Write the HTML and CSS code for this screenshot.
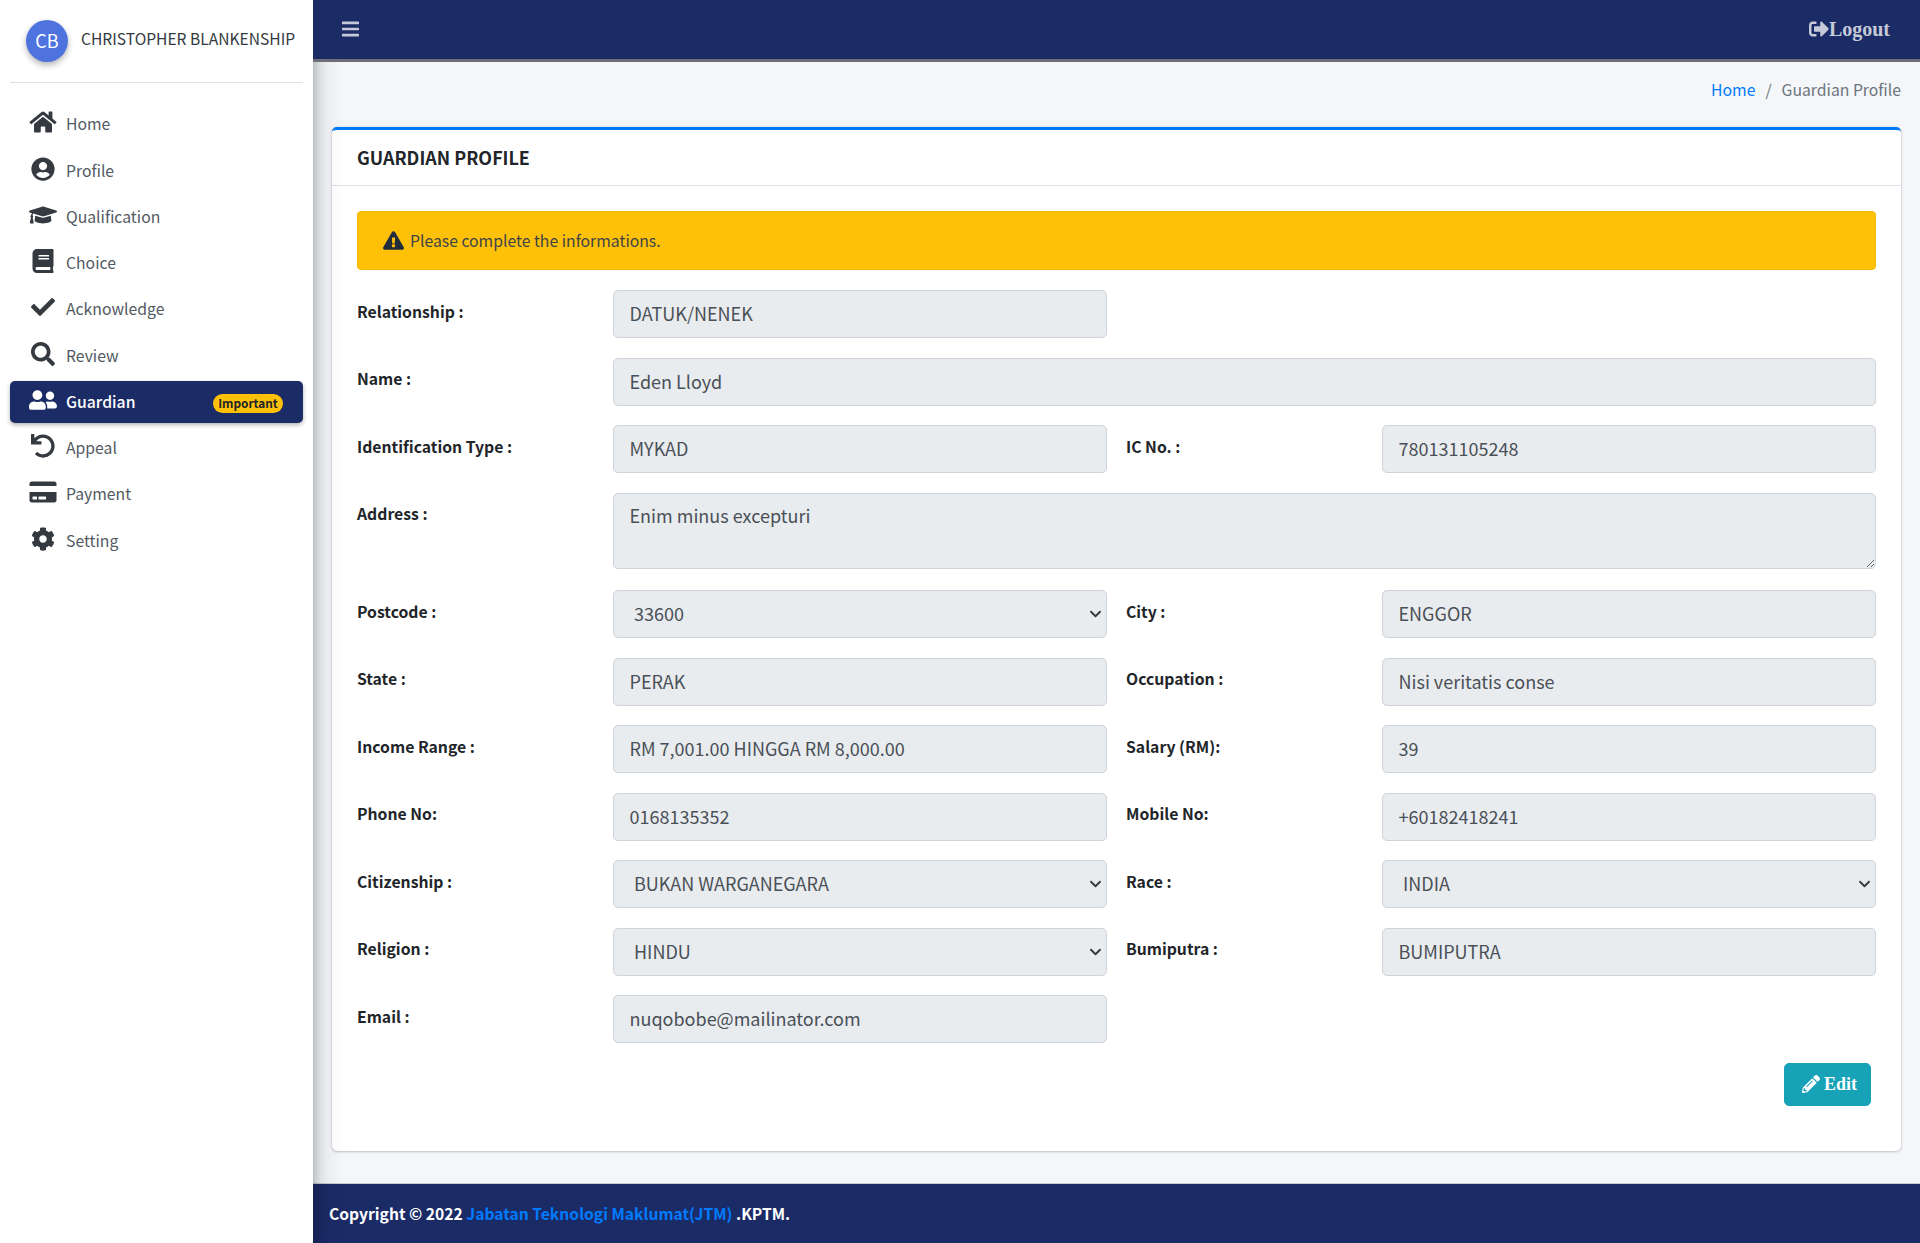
FILE: index.html
```html
<!DOCTYPE html>
<html lang="en">

<head>
    <title>Guardian Profile</title>
    <link rel="stylesheet" href="styles.css">
</head>

<body>
    <svg class="defs" xmlns="http://www.w3.org/2000/svg">
        <symbol id="i-home" viewBox="0 0 576 512"><path d="M280.37 148.26L96 300.11V464a16 16 0 0 0 16 16l112.06-.29a16 16 0 0 0 15.92-16V368a16 16 0 0 1 16-16h64a16 16 0 0 1 16 16v95.64a16 16 0 0 0 16 16.05L464 480a16 16 0 0 0 16-16V300L295.67 148.26a12.19 12.19 0 0 0-15.3 0zM571.6 251.47L488 182.56V44.05a12 12 0 0 0-12-12h-56a12 12 0 0 0-12 12v72.61L318.47 43a48 48 0 0 0-61 0L4.34 251.47a12 12 0 0 0-1.6 16.9l25.5 31A12 12 0 0 0 45.15 301l235.22-193.74a12.19 12.19 0 0 1 15.3 0L530.9 301a12 12 0 0 0 16.9-1.6l25.5-31a12 12 0 0 0-1.7-16.93z"/></symbol>
        <symbol id="i-user" viewBox="0 0 496 512"><path d="M248 8C111 8 0 119 0 256s111 248 248 248 248-111 248-248S385 8 248 8zm0 96c48.6 0 88 39.4 88 88s-39.4 88-88 88-88-39.4-88-88 39.4-88 88-88zm0 344c-58.7 0-111.3-26.6-146.5-68.2 18.8-35.4 55.6-59.8 98.5-59.8 2.4 0 4.8.4 7.1 1.1 13 4.2 26.6 6.9 40.9 6.9 14.3 0 28-2.7 40.9-6.9 2.3-.7 4.7-1.1 7.1-1.1 42.9 0 79.7 24.4 98.5 59.8C359.3 421.4 306.7 448 248 448z"/></symbol>
        <symbol id="i-cap" viewBox="0 0 640 512"><path d="M622.34 153.2L343.4 67.5c-15.2-4.67-31.6-4.67-46.79 0L17.66 153.2c-23.54 7.23-23.54 38.36 0 45.59l48.63 14.94c-10.67 13.19-17.23 29.28-17.88 46.9C38.78 266.15 32 276.11 32 288c0 10.78 5.68 19.85 13.86 25.65L20.33 428.53C18.11 438.52 25.71 448 35.94 448h56.11c10.24 0 17.84-9.48 15.62-19.47L82.14 313.65C90.32 307.85 96 298.78 96 288c0-11.57-6.47-21.25-15.66-26.87.76-15.02 8.44-28.3 20.69-36.72L296.6 284.5c9.06 2.78 26.44 6.25 46.79 0l278.95-85.7c23.55-7.24 23.55-38.36 0-45.6zM352.79 315.09c-28.53 8.76-52.84 3.92-65.59 0l-145.02-44.55L128 384c0 35.35 85.96 64 192 64s192-28.65 192-64l-14.18-113.47-145.03 44.56z"/></symbol>
        <symbol id="i-book" viewBox="0 0 448 512"><path d="M448 360V24c0-13.3-10.7-24-24-24H96C43 0 0 43 0 96v320c0 53 43 96 96 96h328c13.3 0 24-10.7 24-24v-16c0-7.5-3.5-14.3-8.9-18.7-4.2-15.4-4.2-59.3 0-74.7 5.4-4.3 8.9-11.1 8.9-18.6zM128 134c0-3.3 2.7-6 6-6h212c3.3 0 6 2.7 6 6v20c0 3.3-2.7 6-6 6H134c-3.3 0-6-2.7-6-6v-20zm0 64c0-3.3 2.7-6 6-6h212c3.3 0 6 2.7 6 6v20c0 3.3-2.7 6-6 6H134c-3.3 0-6-2.7-6-6v-20zm253.4 250H96c-17.7 0-32-14.3-32-32 0-17.6 14.4-32 32-32h285.4c-1.9 17.1-1.9 46.9 0 64z"/></symbol>
        <symbol id="i-check" viewBox="0 0 512 512"><path d="M173.898 439.404l-166.4-166.4c-9.997-9.997-9.997-26.206 0-36.204l36.203-36.204c9.997-9.998 26.207-9.998 36.204 0L192 312.69 432.095 72.596c9.997-9.997 26.207-9.997 36.204 0l36.203 36.204c9.997 9.997 9.997 26.206 0 36.204l-294.4 294.401c-9.998 9.997-26.207 9.997-36.204-.001z"/></symbol>
        <symbol id="i-search" viewBox="0 0 512 512"><path d="M505 442.7L405.3 343c-4.5-4.5-10.6-7-17-7H372c27.6-35.3 44-79.7 44-128C416 93.1 322.9 0 208 0S0 93.1 0 208s93.1 208 208 208c48.3 0 92.7-16.4 128-44v16.3c0 6.4 2.5 12.5 7 17l99.7 99.7c9.4 9.4 24.6 9.4 33.9 0l28.3-28.3c9.4-9.4 9.4-24.6.1-34zM208 336c-70.7 0-128-57.2-128-128 0-70.7 57.2-128 128-128 70.7 0 128 57.2 128 128 0 70.7-57.2 128-128 128z"/></symbol>
        <symbol id="i-friends" viewBox="0 0 640 512"><path d="M192 256c61.9 0 112-50.1 112-112S253.9 32 192 32 80 82.1 80 144s50.1 112 112 112zm76.8 32h-8.3c-20.8 10-43.9 16-68.5 16s-47.6-6-68.5-16h-8.3C51.6 288 0 339.6 0 403.2V432c0 26.5 21.5 48 48 48h288c26.5 0 48-21.5 48-48v-28.8c0-63.6-51.6-115.2-115.2-115.2zM480 256c53 0 96-43 96-96s-43-96-96-96-96 43-96 96 43 96 96 96zm48 32h-3.8c-13.9 4.8-28.6 8-44.2 8s-30.3-3.2-44.2-8H432c-20.4 0-39.2 5.9-55.7 15.4 24.4 26.3 39.7 61.2 39.7 99.8v38.4c0 2.2-.5 4.3-.6 6.4H592c26.5 0 48-21.5 48-48 0-61.9-50.1-112-112-112z"/></symbol>
        <symbol id="i-undo" viewBox="0 0 512 512"><path d="M212.333 224.333H12c-6.627 0-12-5.373-12-12V12C0 5.373 5.373 0 12 0h48c6.627 0 12 5.373 12 12v78.112C117.773 39.279 184.26 7.47 258.175 8.007c136.906.994 246.448 111.623 246.157 248.532C504.041 393.258 393.12 504 256.333 504c-64.089 0-122.496-24.313-166.51-64.215-5.099-4.622-5.334-12.554-.467-17.42l33.967-33.967c4.474-4.474 11.662-4.717 16.401-.525C170.76 415.336 211.58 432 256.333 432c97.268 0 176-78.716 176-176 0-97.267-78.716-176-176-176-58.496 0-110.28 28.476-142.274 72.333h98.274c6.627 0 12 5.373 12 12v48c0 6.627-5.373 12-12 12z"/></symbol>
        <symbol id="i-card" viewBox="0 0 576 512"><path d="M0 432c0 26.5 21.5 48 48 48h480c26.5 0 48-21.5 48-48V256H0v176zm192-68c0-6.6 5.4-12 12-12h136c6.6 0 12 5.4 12 12v40c0 6.6-5.4 12-12 12H204c-6.6 0-12-5.4-12-12v-40zm-128 0c0-6.6 5.4-12 12-12h72c6.6 0 12 5.4 12 12v40c0 6.6-5.4 12-12 12H76c-6.6 0-12-5.4-12-12v-40zM576 80v48H0V80c0-26.5 21.5-48 48-48h480c26.5 0 48 21.5 48 48z"/></symbol>
        <symbol id="i-cog" viewBox="0 0 512 512"><path d="M487.4 315.7l-42.6-24.6c4.3-23.2 4.3-47 0-70.2l42.6-24.6c4.9-2.8 7.1-8.6 5.5-14-11.1-35.6-30-67.8-54.7-94.6-3.8-4.1-10-5.1-14.8-2.3L380.8 110c-17.9-15.4-38.5-27.3-60.8-35.1V25.8c0-5.6-3.9-10.5-9.4-11.7-36.7-8.2-74.3-7.8-109.2 0-5.5 1.2-9.4 6.1-9.4 11.7V75c-22.2 7.9-42.8 19.8-60.8 35.1L88.7 85.5c-4.9-2.8-11-1.9-14.8 2.3-24.7 26.7-43.6 58.9-54.7 94.6-1.7 5.4.6 11.2 5.5 14L67.3 221c-4.3 23.2-4.3 47 0 70.2l-42.6 24.6c-4.9 2.8-7.1 8.6-5.5 14 11.1 35.6 30 67.8 54.7 94.6 3.8 4.1 10 5.1 14.8 2.3l42.6-24.6c17.9 15.4 38.5 27.3 60.8 35.1v49.2c0 5.6 3.9 10.5 9.4 11.7 36.7 8.2 74.3 7.8 109.2 0 5.5-1.2 9.4-6.1 9.4-11.7v-49.2c22.2-7.9 42.8-19.8 60.8-35.1l42.6 24.6c4.9 2.8 11 1.9 14.8-2.3 24.7-26.7 43.6-58.9 54.7-94.6 1.5-5.5-.7-11.3-5.6-14.1zM256 336c-44.1 0-80-35.9-80-80s35.9-80 80-80 80 35.9 80 80-35.9 80-80 80z"/></symbol>
        <symbol id="i-bars" viewBox="0 0 448 512"><path d="M16 132h416c8.837 0 16-7.163 16-16V76c0-8.837-7.163-16-16-16H16C7.163 60 0 67.163 0 76v40c0 8.837 7.163 16 16 16zm0 160h416c8.837 0 16-7.163 16-16v-40c0-8.837-7.163-16-16-16H16c-8.837 0-16 7.163-16 16v40c0 8.837 7.163 16 16 16zm0 160h416c8.837 0 16-7.163 16-16v-40c0-8.837-7.163-16-16-16H16c-8.837 0-16 7.163-16 16v40c0 8.837 7.163 16 16 16z"/></symbol>
        <symbol id="i-signout" viewBox="0 0 512 512"><path d="M497 273L329 441c-15 15-41 4.5-41-17v-96H152c-13.3 0-24-10.7-24-24v-96c0-13.3 10.7-24 24-24h136V88c0-21.4 25.9-32 41-17l168 168c9.3 9.4 9.3 24.6 0 34zM192 436v-40c0-6.6-5.4-12-12-12H96c-17.7 0-32-14.3-32-32V160c0-17.7 14.3-32 32-32h84c6.6 0 12-5.4 12-12V76c0-6.6-5.4-12-12-12H96c-53 0-96 43-96 96v192c0 53 43 96 96 96h84c6.6 0 12-5.4 12-12z"/></symbol>
        <symbol id="i-warn" viewBox="0 0 576 512"><path d="M569.517 440.013C587.975 472.007 564.806 512 527.94 512H48.054c-36.937 0-59.999-40.055-41.577-71.987L246.423 23.985c18.467-32.009 64.72-31.951 83.154 0l239.94 416.028zM288 354c-25.405 0-46 20.595-46 46s20.595 46 46 46 46-20.595 46-46-20.595-46-46-46zm-43.673-165.346l7.418 136c.347 6.364 5.609 11.346 11.982 11.346h48.546c6.373 0 11.635-4.982 11.982-11.346l7.418-136c.375-6.874-5.098-12.654-11.982-12.654h-63.383c-6.884 0-12.356 5.78-11.981 12.654z"/></symbol>
        <symbol id="i-pencil" viewBox="0 0 512 512"><path d="M497.9 142.1l-46.1 46.1c-4.7 4.7-12.3 4.7-17 0l-111-111c-4.7-4.7-4.7-12.3 0-17l46.1-46.1c18.7-18.7 49.1-18.7 67.9 0l60.1 60.1c18.8 18.7 18.8 49.1 0 67.9zM284.2 99.8L21.6 362.4.4 483.9c-2.9 16.4 11.4 30.6 27.8 27.8l121.5-21.3 262.6-262.6c4.7-4.7 4.7-12.3 0-17l-111-111c-4.8-4.7-12.4-4.7-17.1 0zM124.1 339.9c-5.5-5.5-5.5-14.3 0-19.8l154-154c5.5-5.5 14.3-5.5 19.8 0s5.5 14.3 0 19.8l-154 154c-5.5 5.5-14.3 5.5-19.8 0zM88 424h48v36.3l-64.5 11.3-31.1-31.1L51.7 376H88v48z"/></symbol>
    </svg>

    <aside class="sidebar">
        <div class="user">
            <div class="avatar">CB</div>
            <div class="username">CHRISTOPHER BLANKENSHIP</div>
        </div>
        <nav class="menu">
            <a class="menu-item"><svg class="menu-icon"><use href="#i-home"/></svg><span>Home</span></a>
            <a class="menu-item"><svg class="menu-icon"><use href="#i-user"/></svg><span>Profile</span></a>
            <a class="menu-item"><svg class="menu-icon"><use href="#i-cap"/></svg><span>Qualification</span></a>
            <a class="menu-item"><svg class="menu-icon"><use href="#i-book"/></svg><span>Choice</span></a>
            <a class="menu-item"><svg class="menu-icon"><use href="#i-check"/></svg><span>Acknowledge</span></a>
            <a class="menu-item"><svg class="menu-icon"><use href="#i-search"/></svg><span>Review</span></a>
            <a class="menu-item active"><svg class="menu-icon"><use href="#i-friends"/></svg><span>Guardian</span><span class="badge">Important</span></a>
            <a class="menu-item"><svg class="menu-icon"><use href="#i-undo"/></svg><span>Appeal</span></a>
            <a class="menu-item"><svg class="menu-icon"><use href="#i-card"/></svg><span>Payment</span></a>
            <a class="menu-item"><svg class="menu-icon"><use href="#i-cog"/></svg><span>Setting</span></a>
        </nav>
    </aside>

    <div class="main">
        <header class="topbar">
            <svg class="bars"><use href="#i-bars"/></svg>
            <a class="logout"><svg class="logout-icon"><use href="#i-signout"/></svg>Logout</a>
        </header>

        <div class="content">
            <div class="breadcrumb">
                <a class="crumb-link">Home</a>
                <span class="crumb-sep">/</span>
                <span>Guardian Profile</span>
            </div>

            <section class="card">
                <h3 class="card-title">GUARDIAN PROFILE</h3>
                <div class="card-body">
                    <div class="alert"><svg class="alert-icon"><use href="#i-warn"/></svg>Please complete the informations.</div>

                    <div class="row">
                        <label>Relationship :</label>
                        <input class="field" readonly value="DATUK/NENEK">
                    </div>
                    <div class="row">
                        <label>Name :</label>
                        <input class="field wide" readonly value="Eden Lloyd">
                    </div>
                    <div class="row">
                        <label>Identification Type :</label>
                        <input class="field" readonly value="MYKAD">
                        <label>IC No. :</label>
                        <input class="field" readonly value="780131105248">
                    </div>
                    <div class="row row-address">
                        <label>Address :</label>
                        <textarea class="field wide area" readonly>Enim minus excepturi</textarea>
                    </div>
                    <div class="row">
                        <label>Postcode :</label>
                        <select class="field pick" disabled><option>33600</option></select>
                        <label>City :</label>
                        <input class="field" readonly value="ENGGOR">
                    </div>
                    <div class="row">
                        <label>State :</label>
                        <input class="field" readonly value="PERAK">
                        <label>Occupation :</label>
                        <input class="field" readonly value="Nisi veritatis conse">
                    </div>
                    <div class="row">
                        <label>Income Range :</label>
                        <input class="field" readonly value="RM 7,001.00 HINGGA RM 8,000.00">
                        <label>Salary (RM):</label>
                        <input class="field" readonly value="39">
                    </div>
                    <div class="row">
                        <label>Phone No:</label>
                        <input class="field" readonly value="0168135352">
                        <label>Mobile No:</label>
                        <input class="field" readonly value="+60182418241">
                    </div>
                    <div class="row">
                        <label>Citizenship :</label>
                        <select class="field pick" disabled><option>BUKAN WARGANEGARA</option></select>
                        <label>Race :</label>
                        <select class="field pick" disabled><option>INDIA</option></select>
                    </div>
                    <div class="row">
                        <label>Religion :</label>
                        <select class="field pick" disabled><option>HINDU</option></select>
                        <label>Bumiputra :</label>
                        <input class="field" readonly value="BUMIPUTRA">
                    </div>
                    <div class="row">
                        <label>Email :</label>
                        <input class="field" readonly value="nuqobobe@mailinator.com">
                    </div>

                    <div class="actions">
                        <button class="edit"><svg class="edit-icon"><use href="#i-pencil"/></svg>Edit</button>
                    </div>
                </div>
            </section>
        </div>

        <footer class="footer">
            <span>Copyright &copy; 2022 <a class="footer-link">Jabatan Teknologi Maklumat(JTM)</a> .KPTM.</span>
        </footer>
    </div>
</body>

</html>
```

FILE: styles.css
```css
* {
	box-sizing: border-box;
}

html, body {
	height: 100%;
}

body {
	margin: 0;
	display: flex;
	overflow: hidden;
	font-family: "Noto Sans CJK SC", "Noto Sans", sans-serif;
	font-size: 15.75px;
	line-height: 24px;
	color: #212529;
	background-color: #f4f6f9;
}

.defs {
	display: none;
}

/* sidebar */
.sidebar {
	width: 313px;
	flex-shrink: 0;
	padding: 0 10px;
	background-color: white;
	box-shadow: 0 14px 28px rgba(0, 0, 0, .25), 0 10px 10px rgba(0, 0, 0, .22);
	position: relative;
	z-index: 1;
}

.user {
	height: 83px;
	padding: 20px 0 0 16px;
	display: flex;
	gap: 13px;
	border-bottom: 1px solid #dee2e6;
}

.avatar {
	width: 42px;
	height: 42px;
	flex-shrink: 0;
	border-radius: 50%;
	background-color: #4e73df;
	color: white;
	font-size: 18px;
	line-height: 40px;
	text-align: center;
	box-shadow: 0 3px 6px rgba(0, 0, 0, .3);
}

.username {
	font-size: 15.6px;
	line-height: 37px;
	color: #343a40;
	white-space: nowrap;
}

.menu {
	padding-top: 20.3px;
}

.menu-item {
	height: 42px;
	margin-bottom: 4.25px;
	padding: 0 20px 0 19px;
	display: flex;
	align-items: center;
	border-radius: 5px;
	color: #525a63;
}

.menu-icon {
	width: 28px;
	height: 24px;
	margin-right: 9px;
	fill: #343a40;
	position: relative;
	top: -2px;
}

.menu-item.active {
	background-color: #1b2b66;
	color: white;
	font-weight: 500;
	box-shadow: 0 2px 4px rgba(0, 0, 0, .3);
}

.menu-item.active .menu-icon {
	fill: white;
}

.menu-item .badge {
	margin-left: auto;
	position: relative;
	top: 2px;
	width: 70px;
	height: 19px;
	border-radius: 10px;
	background-color: #ffc107;
	color: #212529;
	font-size: 11.8px;
	font-weight: 700;
	line-height: 18px;
	text-align: center;
}

/* top bar */
.main {
	flex: 1;
	min-width: 0;
	display: flex;
	flex-direction: column;
}

.topbar {
	height: 62px;
	flex-shrink: 0;
	padding: 0 30px 2px 29px;
	display: flex;
	align-items: center;
	justify-content: space-between;
	background-color: #1b2b66;
	border-bottom: 3px solid #6c6e7a;
	position: relative;
	z-index: 2;
}

.bars {
	width: 17px;
	height: 20px;
	fill: #c6cad8;
}

.logout {
	display: flex;
	align-items: center;
	font-family: "Liberation Serif", serif;
	font-size: 20px;
	font-weight: 700;
	color: #c6cad8;
}

.logout-icon {
	width: 20px;
	height: 20px;
	fill: #c6cad8;
}

/* content */
.content {
	flex: 1;
	padding: 0 19px;
	min-height: 0;
}

.breadcrumb {
	height: 65px;
	padding-top: 16px;
	display: flex;
	justify-content: flex-end;
	gap: 10px;
	color: #6c757d;
}

.crumb-link {
	color: #007bff;
}

.card {
	height: 1024px;
	background-color: white;
	border-top: 3px solid #007bff;
	border-radius: 5px;
	box-shadow: 0 0 1px rgba(0, 0, 0, .25), 0 1px 3px rgba(0, 0, 0, .2);
}

.card-title {
	margin: 0;
	height: 56px;
	padding: 0 25px;
	font-size: 17.9px;
	font-weight: 700;
	line-height: 54px;
	border-bottom: 1px solid #dee2e6;
}

.card-body {
	padding: 25px;
}

.alert {
	height: 59px;
	margin-bottom: 20px;
	padding-left: 25px;
	display: flex;
	align-items: center;
	background-color: #ffc107;
	border: 1px solid #f5b900;
	border-radius: 4px;
	color: #3d4449;
}

.alert-icon {
	width: 21px;
	height: 19px;
	margin-right: 6px;
	fill: #212c3c;
}

/* form */
.row {
	display: grid;
	grid-template-columns: 237px 494px 237px 1fr;
	column-gap: 19px;
	margin-bottom: 19.5px;
}

.row label {
	padding-top: 9.5px;
	font-weight: 700;
}

.row-address {
	margin-bottom: 21.5px;
}

.field {
	width: 100%;
	height: 48px;
	padding: 0 15.5px 2px;
	font-family: inherit;
	font-size: 18px;
	color: #495057;
	background-color: #e9ecef;
	border: 1px solid #ced4da;
	border-radius: 5px;
	outline: none;
	opacity: 1;
}

.wide {
	grid-column: 2 / 5;
}

.area {
	display: block;
	height: 76px;
	padding-top: 8px;
	line-height: 26px;
}

.pick {
	appearance: none;
	padding-left: 20px;
	background-image: url("data:image/svg+xml,%3csvg xmlns='http://www.w3.org/2000/svg' viewBox='0 0 16 16'%3e%3cpath fill='none' stroke='%23343a40' stroke-linecap='round' stroke-linejoin='round' stroke-width='2.5' d='M2 5l6 6 6-6'/%3e%3c/svg%3e");
	background-repeat: no-repeat;
	background-position: right 3px center;
	background-size: 15px 12px;
}

.actions {
	display: flex;
	justify-content: flex-end;
	padding-right: 5px;
}

.edit {
	width: 87px;
	height: 43px;
	padding: 0 0 0 4px;
	display: flex;
	align-items: center;
	justify-content: center;
	gap: 4px;
	background-color: #17a2b8;
	color: white;
	border: 1px solid #17a2b8;
	border-radius: 5px;
	font-family: "Liberation Serif", serif;
	font-size: 18px;
	font-weight: 700;
}

.edit-icon {
	width: 18px;
	height: 18px;
	fill: white;
}

/* footer */
.footer {
	height: 60px;
	flex-shrink: 0;
	padding-left: 16px;
	display: flex;
	align-items: center;
	background-color: #1b2b66;
	border-top: 1px solid #c5c8d2;
	color: white;
	font-size: 15.65px;
	font-weight: 700;
}

.footer-link {
	color: #007bff;
}
```
